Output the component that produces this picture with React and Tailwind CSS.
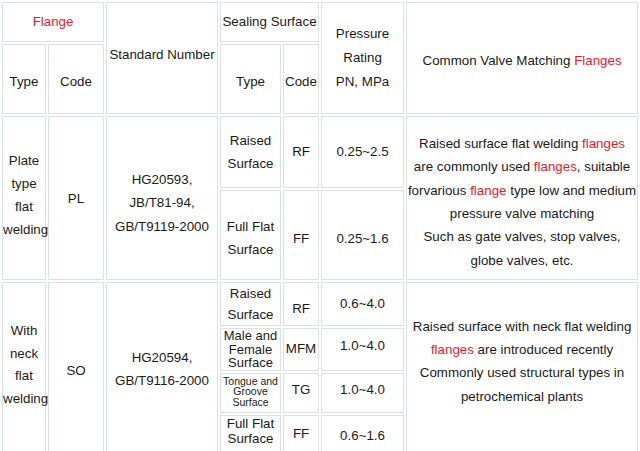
import React from "react";

const R = ({ children }) => <span className="text-[#e8192c]">{children}</span>;

const td = "border border-[#dce1e5] bg-white text-center align-middle p-0 whitespace-nowrap";

export default function App() {
  return (
    <div className="w-[640px] h-[451px] overflow-hidden bg-white text-[#1a1a1a] text-[13.33px]" style={{ fontFamily: '"Liberation Sans", Arial, sans-serif' }}>
      <table className="table-fixed border-separate border-spacing-[2px] w-[640px]">
        <colgroup>
          <col className="w-[44px]" />
          <col className="w-[56px]" />
          <col className="w-[112px]" />
          <col className="w-[61px]" />
          <col className="w-[36px]" />
          <col className="w-[83px]" />
          <col className="w-[232px]" />
        </colgroup>
        <tbody>
          <tr className="h-[40px]">
            <td colSpan={2} className={td}><R>Flange</R></td>
            <td rowSpan={2} className={`${td} pb-[6px]`}>Standard Number</td>
            <td colSpan={2} className={td}>Sealing Surface</td>
            <td rowSpan={2} className={`${td} leading-[24px]`}>Pressure<br />Rating<br />PN, MPa</td>
            <td rowSpan={2} className={`${td} pt-[6px]`}>Common Valve Matching <R>Flanges</R></td>
          </tr>
          <tr className="h-[70px]">
            <td className={`${td} pt-[6px]`}>Type</td>
            <td className={`${td} pt-[6px]`}>Code</td>
            <td className={`${td} pt-[6px]`}>Type</td>
            <td className={`${td} pt-[6px]`}>Code</td>
          </tr>
          <tr className="h-[72px]">
            <td rowSpan={2} className={`${td} leading-[23px] pb-[7px]`}>Plate<br />type<br />flat<br />welding</td>
            <td rowSpan={2} className={`${td} pt-[2px]`}>PL</td>
            <td rowSpan={2} className={`${td} leading-[23.5px] pt-[10px]`}>HG20593,<br />JB/T81-94,<br />GB/T9119-2000</td>
            <td className={`${td} leading-[23px]`}>Raised<br />Surface</td>
            <td className={td}>RF</td>
            <td className={td}>0.25~2.5</td>
            <td rowSpan={2} className={`${td} leading-[23.3px] pt-[8px]`}>
              Raised surface flat welding <R>flanges</R><br />
              are commonly used <R>flanges</R>, suitable<br />
              forvarious <R>flange</R> type low and medium<br />
              pressure valve matching<br />
              Such as gate valves, stop valves,<br />
              globe valves, etc.
            </td>
          </tr>
          <tr className="h-[90px]">
            <td className={`${td} leading-[23px] pt-[5px]`}>Full Flat<br />Surface</td>
            <td className={`${td} pt-[7px]`}>FF</td>
            <td className={`${td} pt-[7px]`}>0.25~1.6</td>
          </tr>
          <tr className="h-[42px]">
            <td rowSpan={4} className={`${td} leading-[22.5px] pb-[8px]`}>With<br />neck<br />flat<br />welding</td>
            <td rowSpan={4} className={`${td} pt-[3px]`}>SO</td>
            <td rowSpan={4} className={`${td} leading-[23.5px]`}>HG20594,<br />GB/T9116-2000</td>
            <td className={`${td} leading-[21px]`}>Raised<br />Surface</td>
            <td className={`${td} pt-[9px]`}>RF</td>
            <td className={td}>0.6~4.0</td>
            <td rowSpan={4} className={`${td} leading-[23.3px] pb-[16px]`}>
              Raised surface with neck flat welding<br />
              <R>flanges</R> are introduced recently<br />
              Commonly used structural types in<br />
              petrochemical plants
            </td>
          </tr>
          <tr className="h-[42px]">
            <td className={`${td} text-[13px] leading-[13.5px]`}>Male and<br />Female<br />Surface</td>
            <td className={td}>MFM</td>
            <td className={`${td} pb-[6px]`}>1.0~4.0</td>
          </tr>
          <tr className="h-[40px]">
            <td className={`${td} text-[10.5px] leading-[10.6px] pb-[2px]`}>Tongue and<br />Groove<br />Surface</td>
            <td className={`${td} pb-[6px]`}>TG</td>
            <td className={`${td} pb-[6px]`}>1.0~4.0</td>
          </tr>
          <tr className="h-[42px]">
            <td className={`${td} leading-[15px] pb-[9px]`}>Full Flat<br />Surface</td>
            <td className={`${td} pb-[4px]`}>FF</td>
            <td className={td}>0.6~1.6</td>
          </tr>
        </tbody>
      </table>
    </div>
  );
}
